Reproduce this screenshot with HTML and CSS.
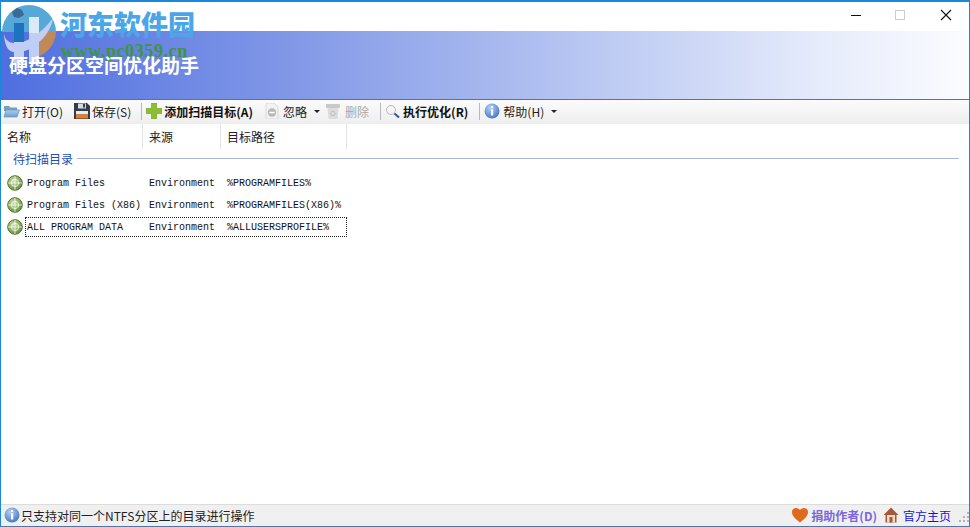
FILE: index.html
```html
<!DOCTYPE html>
<html lang="zh-CN">
<head>
    <meta charset="UTF-8">
    <title>硬盘分区空间优化助手</title>
    <link rel="stylesheet" href="styles.css">
</head>
<body>
    <svg width="0" height="0" class="defs">
        <defs>
            <radialGradient id="globeFill" cx="40%" cy="35%" r="70%">
                <stop offset="0" stop-color="#cfe0a8"/>
                <stop offset="1" stop-color="#5d8a35"/>
            </radialGradient>
            <radialGradient id="infoFill" cx="40%" cy="30%" r="75%">
                <stop offset="0" stop-color="#b4d2f4"/>
                <stop offset="1" stop-color="#3f74c4"/>
            </radialGradient>
            <linearGradient id="folderFill" x1="0" y1="0" x2="0" y2="1">
                <stop offset="0" stop-color="#a9cdf0"/>
                <stop offset="1" stop-color="#6f9ed2"/>
            </linearGradient>
            <symbol id="globe" viewBox="0 0 16 16">
                <circle cx="8" cy="8" r="7.3" fill="url(#globeFill)" stroke="#56752f"/>
                <circle cx="8" cy="8" r="3.6" fill="none" stroke="#fff" stroke-opacity=".75"/>
                <path d="M8 1v14M1 8h14" stroke="#fff" stroke-opacity=".75"/>
            </symbol>
            <symbol id="info" viewBox="0 0 16 16">
                <circle cx="8" cy="8" r="7.5" fill="url(#infoFill)"/>
                <rect x="7" y="3" width="2.2" height="2" fill="#fff"/>
                <rect x="7" y="6.3" width="2.2" height="6.2" fill="#fff"/>
            </symbol>
        </defs>
    </svg>

    <div class="window">
        <div class="titlebar">
            <div class="winbtns">
                <svg width="12" height="12" viewBox="0 0 12 12"><path d="M1 6.500h10" stroke="#111" stroke-width="1"/></svg>
                <svg width="12" height="12" viewBox="0 0 12 12"><rect x="1.500" y="1.500" width="9" height="9" fill="none" stroke="#ccc"/></svg>
                <svg width="12" height="12" viewBox="0 0 12 12"><path d="M1 1l10 10M11 1L1 11" stroke="#111" stroke-width="1.100"/></svg>
            </div>
        </div>
        <div class="banner"></div>

        <div class="toolbar">
            <div class="tool tool-open">
                <svg class="ico" width="17" height="15" viewBox="0 0 17 15"><path d="M1 2h5l1.500 1.500H14V7H1z" fill="#7d9cc0"/><path d="M1 13L3 6h13.500L14 13z" fill="url(#folderFill)" stroke="#6c92bd" stroke-width=".7"/></svg>
                <span>打开(O)</span>
            </div>
            <div class="tool tool-save">
                <svg class="ico" width="16" height="16" viewBox="0 0 16 16"><path d="M0 0h13l3 3v13H0z" fill="#333c48"/><rect x="4" y="0.500" width="8" height="5" fill="#d6dbe0"/><rect x="9" y="1" width="2" height="3.500" fill="#333c48"/><rect x="2" y="8" width="12" height="3.500" fill="#ececec"/><rect x="2" y="11.500" width="12" height="4" fill="#ec7a1e"/></svg>
                <span>保存(S)</span>
            </div>
            <i class="sep"></i>
            <div class="tool bold tool-add">
                <svg class="ico" width="16" height="16" viewBox="0 0 16 16"><path d="M5.500 0h5v5.500H16v5h-5.500V16h-5v-5.500H0v-5h5.500z" fill="#8cbf2e" stroke="#6b9a1e" stroke-width=".6"/></svg>
                <span>添加扫描目标(A)</span>
            </div>
            <div class="tool tool-ignore">
                <svg class="ico" width="14" height="16" viewBox="0 0 14 16"><path d="M1 0h8l4 4v12H1z" fill="#f2f2f2" stroke="#dadada"/><circle cx="7" cy="9.500" r="4.200" fill="#b8b8b8"/><rect x="4.300" y="8.800" width="5.400" height="1.500" fill="#fff"/></svg>
                <span>忽略</span>
                <i class="caret"></i>
            </div>
            <div class="tool disabled">
                <svg class="ico" width="16" height="16" viewBox="0 0 16 16"><rect x="1" y="1" width="14" height="4" rx="1" fill="#c9c9c9"/><path d="M2.500 5h11l-1 11h-9z" fill="#dcdcdc"/><circle cx="8" cy="10.500" r="2.200" fill="none" stroke="#bdbdbd"/></svg>
                <span>删除</span>
            </div>
            <i class="sep"></i>
            <div class="tool bold tool-run">
                <svg class="ico" width="15" height="15" viewBox="0 0 15 15"><circle cx="6" cy="6" r="4.500" fill="#f6f6f6" stroke="#b9b9b9"/><path d="M9.500 9.500L14 13.500" stroke="#2b5f9e" stroke-width="2.200"/></svg>
                <span>执行优化(R)</span>
            </div>
            <i class="sep"></i>
            <div class="tool tool-help">
                <svg class="ico" width="16" height="16"><use href="#info"/></svg>
                <span>帮助(H)</span>
                <i class="caret"></i>
            </div>
        </div>

        <div class="columns">
            <div class="col col-name">名称</div>
            <div class="col col-src">来源</div>
            <div class="col col-path">目标路径</div>
        </div>

        <div class="list">
            <div class="group"><span>待扫描目录</span><i></i></div>
            <div class="row">
                <svg class="globe" width="16" height="16"><use href="#globe"/></svg>
                <div class="cells">
                    <span class="cell-name">Program Files</span>
                    <span class="cell-src">Environment</span>
                    <span class="cell-path">%PROGRAMFILES%</span>
                </div>
            </div>
            <div class="row">
                <svg class="globe" width="16" height="16"><use href="#globe"/></svg>
                <div class="cells">
                    <span class="cell-name">Program Files (X86)</span>
                    <span class="cell-src">Environment</span>
                    <span class="cell-path">%PROGRAMFILES(X86)%</span>
                </div>
            </div>
            <div class="row">
                <svg class="globe" width="16" height="16"><use href="#globe"/></svg>
                <div class="cells focused">
                    <span class="cell-name">ALL PROGRAM DATA</span>
                    <span class="cell-src">Environment</span>
                    <span class="cell-path">%ALLUSERSPROFILE%</span>
                </div>
            </div>
        </div>

        <div class="statusbar">
            <svg class="ico" width="16" height="16"><use href="#info"/></svg>
            <span class="status-msg">只支持对同一个NTFS分区上的目录进行操作</span>
            <svg class="ico" width="16" height="16" viewBox="0 0 16 16"><path d="M8 15.500C3 11.500 0 9 0 5c0-4.500 5.500-5.500 8-2 2.500-3.500 8-2.500 8 2 0 4-3 6.500-8 10.500z" fill="#de6a1e"/></svg>
            <a class="donate">捐助作者(D)</a>
            <svg class="ico home" width="16" height="16" viewBox="0 0 16 16"><path d="M8 0.500L0.500 8h2v7.500h11V8h2z" fill="#a8583a"/><rect x="4" y="8" width="8" height="7.500" fill="#eadcc4"/><rect x="6.500" y="10" width="3" height="5.500" fill="#a8583a"/></svg>
            <a class="homepage">官方主页</a>
            <div class="grip"><i></i><i></i><i></i><i></i><i></i><i></i></div>
        </div>
    </div>

    <!-- site watermark burned into the screenshot -->
    <div class="watermark">
        <svg width="58" height="58" viewBox="0 0 58 58">
            <path d="M1 27a27 27 0 0 1 54 0z" fill="#55a8d8"/>
            <path d="M30 53A27 27 0 0 0 55 27H44z" fill="#c08a58"/>
            <path d="M3 27C3 45 30 42 52 13 50 30 30 50 12 47 6 46 3 38 3 27z" fill="#c0cdf5"/>
            <rect x="13" y="18" width="10" height="19" fill="#1c74c0"/>
            <rect x="13" y="37" width="10" height="21" fill="#c0cdf5"/>
            <rect x="28" y="12" width="10" height="16" fill="#dceaf8"/>
            <rect x="28" y="28" width="10" height="30" fill="#c0cdf5"/>
            <path d="M11 7l5-4 5 2 2 5-5 3-5-1z" fill="#3b6b94"/>
        </svg>
        <div class="wm-name">河东软件园</div>
        <div class="wm-url">www.pc0359.cn</div>
    </div>
    <h1 class="app-title">硬盘分区空间优化助手</h1>
</body>
</html>
```

FILE: styles.css
```css
html, body {
    margin: 0;
    height: 100%;
    overflow: hidden;
}
body {
    font-family: "Noto Sans CJK SC", "Liberation Sans", sans-serif;
    font-size: 12px;
    color: #222;
    background: #fff;
}
.defs {
    position: absolute;
}
.window {
    height: 527px;
    box-sizing: border-box;
    border: 1px solid #1a87d9;
    border-top-width: 2px;
    display: flex;
    flex-direction: column;
}
.titlebar {
    height: 29px;
    display: flex;
    justify-content: flex-end;
    align-items: flex-start;
    padding-top: 7px;
    box-sizing: border-box;
}
.winbtns {
    display: flex;
    gap: 33px;
    padding-right: 17px;
}
.winbtns svg:nth-child(2) {
    margin-right: 1px;
    margin-left: -1px;
}
.banner {
    height: 68px;
    background: linear-gradient(90deg, #4f6fe0 0%, #7e95e6 28%, #b4c3f1 58%, #e6ecfb 85%, #fbfcff 100%);
}
.app-title {
    position: absolute;
    left: 9px;
    top: 52px;
    margin: 0;
    font-size: 19px;
    line-height: 26px;
    font-weight: 700;
    color: #fff;
}
.toolbar {
    height: 25px;
    box-sizing: border-box;
    border-top: 1px solid #4a6fd8;
    background: linear-gradient(#fbfbfb, #eeeeee);
    display: flex;
    align-items: center;
    padding: 0 0 2px 2px;
}
.tool {
    display: flex;
    align-items: center;
    gap: 2px;
    margin-right: 10px;
    white-space: nowrap;
}
.tool.bold {
    font-weight: 700;
    color: #111;
    gap: 3px;
}
.tool.tool-open {
    margin-right: 11px;
}
.tool.tool-save {
    margin-right: 11px;
}
.tool.tool-add {
    gap: 2px;
    margin-right: 12px;
}
.tool.tool-ignore {
    gap: 4px;
}
.tool-ignore .caret {
    margin-left: 3px;
}
.tool.disabled {
    color: #a8a8a8;
    gap: 4px;
    margin-left: -5px;
    margin-right: 12px;
}
.tool.tool-run {
    margin-right: 12px;
}
.tool.tool-help {
    gap: 3px;
}
.ico {
    flex: none;
}
.sep {
    width: 1px;
    height: 17px;
    background: #b8b8b8;
    margin-right: 4px;
    margin-left: -1px;
}
.caret {
    width: 0;
    height: 0;
    border: 3px solid transparent;
    border-top: 3px solid #222;
    border-bottom: 0;
    margin-left: 4px;
}
.columns {
    height: 25px;
    display: flex;
    flex: none;
}
.col {
    box-sizing: border-box;
    height: 25px;
    line-height: 25px;
    padding-left: 6px;
    border-right: 1px solid #e3e3e3;
}
.col-name {
    width: 142px;
}
.col-src {
    width: 78px;
}
.col-path {
    width: 126px;
}
.list {
    flex: 1;
}
.group {
    display: flex;
    align-items: center;
    gap: 4px;
    height: 18px;
    padding: 0 10px 0 12px;
    color: #1c4fb4;
}
.group i {
    flex: 1;
    height: 1px;
    background: #a9b8d8;
}
.row {
    display: flex;
    align-items: center;
    height: 22px;
    padding-left: 6px;
}
.group + .row {
    margin-top: 5px;
}
.globe {
    flex: none;
}
.cells {
    display: flex;
    align-items: center;
    height: 20px;
    width: 322px;
    box-sizing: border-box;
    margin-left: 2px;
    padding-left: 1px;
    border: 1px dotted transparent;
    font-family: "Liberation Mono", "DejaVu Sans Mono", monospace;
    font-size: 10px;
    color: #111;
    white-space: pre;
}
.cells.focused {
    border-color: #222;
}
.cell-name {
    width: 122px;
}
.cell-src {
    width: 78px;
}
.statusbar {
    height: 22px;
    flex: none;
    box-sizing: border-box;
    border-top: 1px solid #dcdcdc;
    background: #f0f0f0;
    display: flex;
    align-items: center;
    padding: 0 0 1px 3px;
}
.status-msg {
    flex: 1;
    margin-left: 1px;
}
.donate {
    color: #7a66e0;
    font-weight: 700;
    margin-left: 3px;
}
.home {
    margin-left: 6px;
}
.homepage {
    color: #1212e0;
    margin-left: 4px;
}
.grip {
    width: 12px;
    height: 12px;
    margin: 6px 0 0 6px;
    display: grid;
    grid-template-columns: repeat(3, 2px);
    grid-template-rows: repeat(3, 2px);
    gap: 2px;
    justify-content: end;
}
.grip i {
    background: #b4b4b4;
}
.grip i:nth-child(1) {
    grid-area: 1 / 3;
}
.grip i:nth-child(2) {
    grid-area: 2 / 2;
}
.grip i:nth-child(3) {
    grid-area: 2 / 3;
}
.grip i:nth-child(4) {
    grid-area: 3 / 1;
}
.grip i:nth-child(5) {
    grid-area: 3 / 2;
}
.grip i:nth-child(6) {
    grid-area: 3 / 3;
}
.watermark {
    position: absolute;
    left: 1px;
    top: 5px;
    width: 230px;
    height: 60px;
}
.watermark svg {
    position: absolute;
    left: 0;
    top: 0;
}
.wm-name {
    position: absolute;
    left: 59px;
    top: 1px;
    font-family: "Noto Sans CJK SC", sans-serif;
    font-size: 27px;
    line-height: 36px;
    font-weight: 900;
    color: #4aa6e6;
    white-space: nowrap;
}
.wm-url {
    position: absolute;
    left: 60px;
    top: 38px;
    font-family: "Liberation Serif", serif;
    font-size: 18px;
    line-height: 17px;
    letter-spacing: .6px;
    font-weight: 700;
    color: #3f9440;
    white-space: nowrap;
}
```
